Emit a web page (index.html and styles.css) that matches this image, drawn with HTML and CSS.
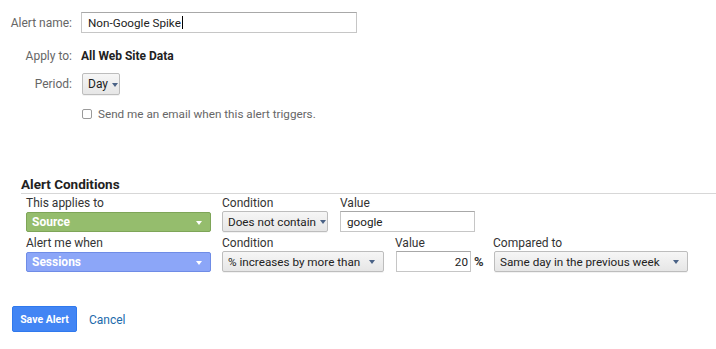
FILE: index.html
```html
<!DOCTYPE html>
<html>
<head>
<meta charset="utf-8">
<link rel="stylesheet" href="styles.css">
</head>
<body>
<div class="page">
  <div class="form">
    <div class="lbl row1">Alert name:</div>
    <div class="row1"><div class="text-input name-input">Non-Google Spike<span class="caret"></span></div></div>
    <div class="lbl row2">Apply to:</div>
    <div class="row2 strong">All Web Site Data</div>
    <div class="lbl row3">Period:</div>
    <div class="row3"><div class="btn-select day">Day<span class="arr"></span></div></div>
    <div class="row4"></div>
    <div class="row4 check-row"><span class="checkbox"></span>Send me an email when this alert triggers.</div>
  </div>

  <div class="conditions">
    <div class="cond-title">Alert Conditions</div>
    <div class="cond-row">
      <div class="field f-dim">
        <div class="flabel">This applies to</div>
        <div class="color-select green">Source<span class="arr white"></span></div>
      </div>
      <div class="field f-cond1">
        <div class="flabel">Condition</div>
        <div class="btn-select wide">Does not contain<span class="arr"></span></div>
      </div>
      <div class="field f-val1">
        <div class="flabel">Value</div>
        <div class="text-input val1">google</div>
      </div>
    </div>
    <div class="cond-row">
      <div class="field f-dim">
        <div class="flabel">Alert me when</div>
        <div class="color-select blue">Sessions<span class="arr white"></span></div>
      </div>
      <div class="field f-cond2">
        <div class="flabel">Condition</div>
        <div class="btn-select spread cond2">% increases by more than<span class="arr"></span></div>
      </div>
      <div class="field f-val2">
        <div class="flabel">Value</div>
        <div class="val2-wrap"><div class="text-input val2">20</div><span class="pct">%</span></div>
      </div>
      <div class="field f-cmp">
        <div class="flabel">Compared to</div>
        <div class="btn-select spread cmp">Same day in the previous week<span class="arr"></span></div>
      </div>
    </div>
  </div>

  <div class="actions">
    <div class="save">Save Alert</div>
    <div class="cancel">Cancel</div>
  </div>
</div>
</body>
</html>
```
FILE: styles.css
```css
* { box-sizing: border-box; }
html, body { margin: 0; padding: 0; background: #fff; }
body { font-family: Roboto, "Liberation Sans", Arial, sans-serif; font-size: 12px; color: #333; }
.page { padding: 12px 0 0 0; width: 716px; height: 349px; overflow: hidden; }

.form {
  display: grid;
  grid-template-columns: 72px auto;
  column-gap: 9px;
  align-items: center;
}
.lbl { text-align: right; color: #666; font-size: 12px; }
.row1 { height: 21px; display: flex; align-items: center; }
.lbl.row1 { justify-content: flex-end; }
.row2 { margin-top: 14px; height: 18px; line-height: 18px; }
.row3 { margin-top: 8px; height: 22px; display: flex; align-items: center; }
.lbl.row3 { justify-content: flex-end; }
.row4 { margin-top: 8px; height: 22px; display: flex; align-items: center; }
.strong { font-weight: bold; color: #222; }

.text-input {
  border: 1px solid #c6c6c6;
  border-top-color: #a8a8a8;
  height: 21px;
  padding: 0 6px;
  display: flex;
  align-items: center;
  color: #222;
  font-size: 11.7px;
  background: #fff;
  white-space: nowrap;
}
.name-input { width: 276px; }
.caret { display: inline-block; width: 1px; height: 13px; background: #000; margin-left: 1px; }

.btn-select {
  border: 1px solid #bdbdbd;
  border-radius: 2px;
  background: linear-gradient(#f6f6f6, #e6e6e6);
  height: 21px;
  padding: 0 6px 0 5px;
  display: flex;
  align-items: center;
  color: #222;
  font-size: 11.7px;
  white-space: nowrap;
  box-shadow: 0 1px 0 rgba(0,0,0,0.05);
}
.day { width: 38px; padding: 0 5px; margin-left: 1px; height: 22px; font-size: 12px; }
.arr {
  display: inline-block;
  flex: none;
  width: 0; height: 0;
  border-left: 3.5px solid transparent;
  border-right: 3.5px solid transparent;
  border-top: 4px solid #4a6286;
  margin-left: 4px;
  margin-top: 1px;
}
.arr.white { border-top-color: #fff; }
.spread { justify-content: space-between; }

.check-row { color: #666; margin-left: 1px; font-size: 11.7px; }
.checkbox {
  width: 10px; height: 10px;
  border: 1px solid #9a9a9a;
  border-radius: 2px;
  margin-right: 6px;
  background: #fff;
}

.conditions { margin-top: 52px; padding-left: 21px; }
.cond-title { font-weight: bold; font-size: 13.5px; color: #222; height: 15px; line-height: 15px; padding-bottom: 1px; border-bottom: 1px solid #d7d7d7; box-sizing: content-box; }
.cond-row { display: flex; padding-left: 5px; }
.field { display: flex; flex-direction: column; }
.flabel { height: 17px; line-height: 16px; color: #333; font-size: 12px; padding-top: 1px; }
.f-dim { width: 196px; }
.f-cond1 { width: 118px; }
.f-cond2 { width: 173px; }
.f-val2 { width: 98px; }
.color-select {
  width: 185px; height: 20px;
  border-radius: 2px;
  color: #fff;
  font-weight: bold;
  font-size: 12px;
  display: flex;
  align-items: center;
  justify-content: space-between;
  padding: 0 8px 0 5px;
  margin-top: 1px;
}
.green { background: #95bd6d; border: 1px solid #7ea558; }
.blue { background: #8ca6f8; border: 1px solid #6f8ce6; }
.wide { width: 106px; }
.val1 { width: 135px; margin-top: 0; }
.cond2 { width: 162px; padding-right: 8px; }
.val2-wrap { display: flex; align-items: center; margin-left: 1px; }
.val2 { width: 75px; justify-content: flex-end; padding-right: 2px; }
.pct { margin-left: 3px; font-weight: bold; color: #333; font-size: 13px; }
.cmp { width: 194px; margin-left: 1px; padding-right: 8px; }
.cond-row + .cond-row { margin-top: 2px; }

.actions { display: flex; align-items: center; margin-top: 34px; padding-left: 12px; }
.save {
  background: #4285f4;
  border: 1px solid #3079ed;
  color: #fff;
  font-weight: bold;
  font-size: 10.5px;
  height: 26px;
  width: 65px;
  display: flex; align-items: center; justify-content: center;
  border-radius: 2px;
}
.cancel { margin-left: 12px; color: #1c6aab; font-size: 12px; margin-top: 2px; }
```
